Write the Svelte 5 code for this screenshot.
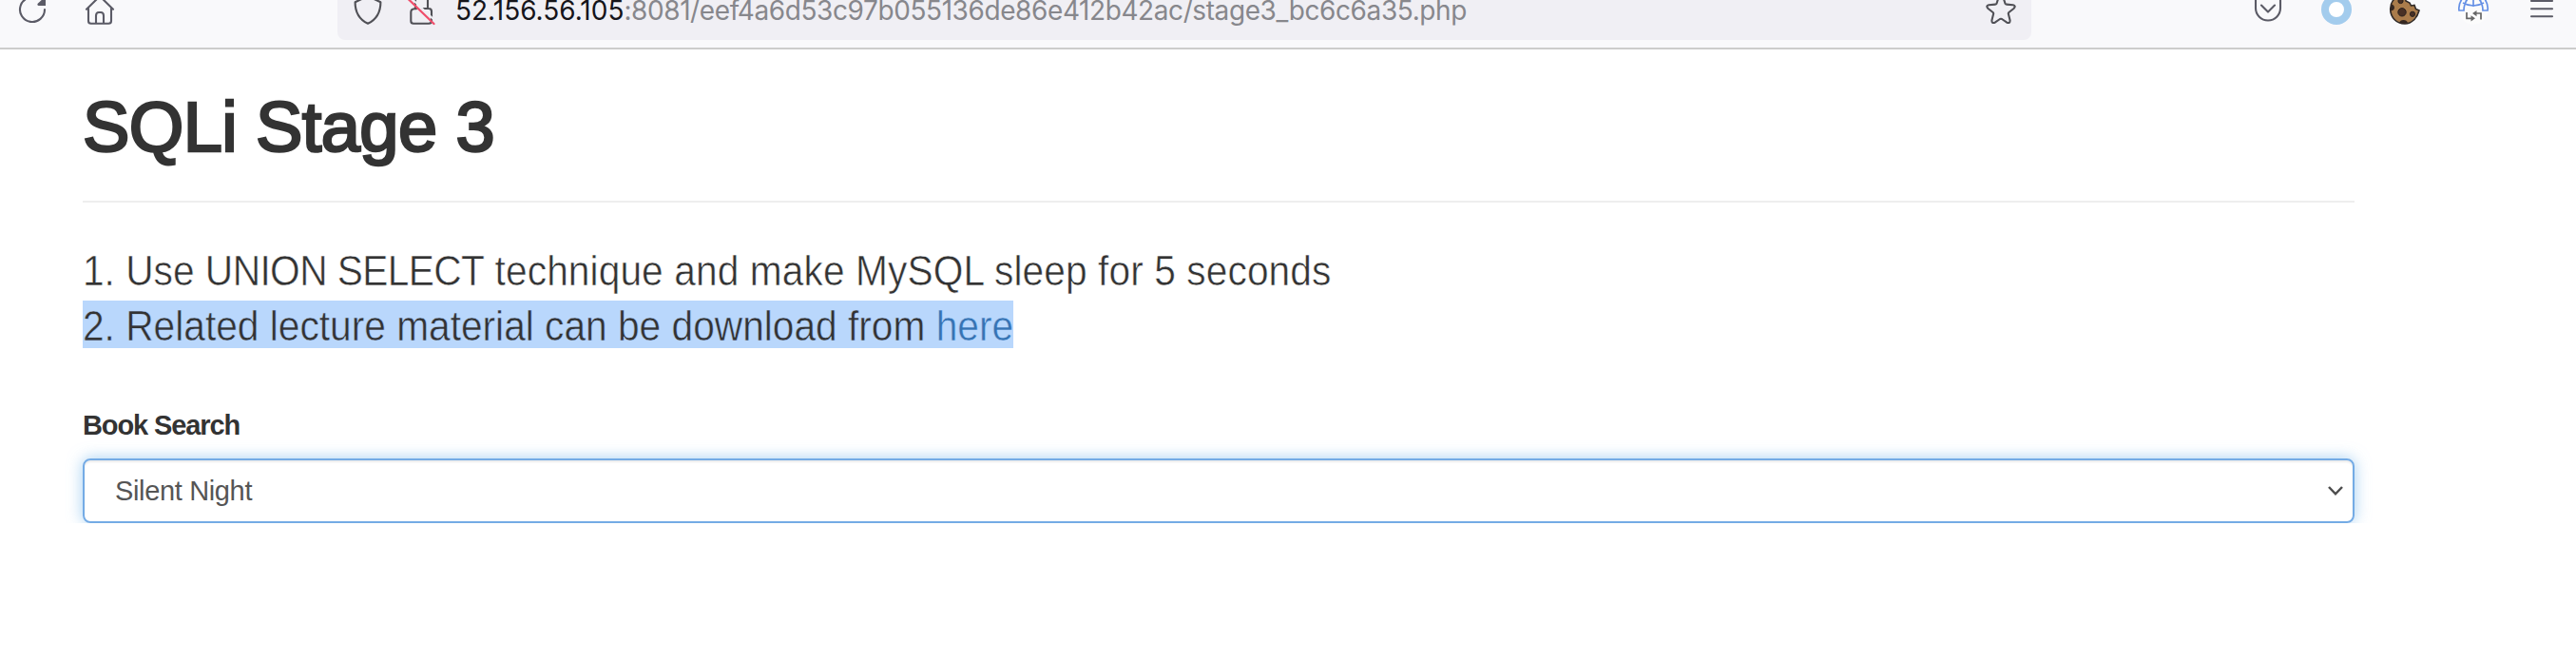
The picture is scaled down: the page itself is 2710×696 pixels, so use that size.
<script>
  const host = '52.156.56.105';
  const path = ':8081/eef4a6d53c97b055136de86e412b42ac/stage3_bc6c6a35.php';
</script>

<header class="toolbar">
  <nav class="nav">
    <svg class="icon" width="40" height="50" viewBox="14 0 40 50" aria-label="Reload">
      <path d="M47 10A13 13 0 1 1 40 -1.5" />
      <path class="solid" d="M48 -4V6H40.5Q38.5 5 40 3.5Z" />
    </svg>
    <svg class="icon" width="40" height="50" viewBox="85 0 40 50" aria-label="Home">
      <path d="M91 9.7L103.4 -2.4Q105 -4 106.6 -2.4L119 9.7M93 8.5V22Q93 24.8 95.8 24.8H114.2Q117 24.8 117 22V8.5M101 24.5V16.5Q101 13 104 13H106Q109 13 109 16.5V24.5" />
    </svg>
  </nav>

  <div class="address">
    <svg class="icon dark" width="105" height="42" viewBox="355 0 105 42" aria-hidden="true">
      <path d="M387 -4L400.4 2.2C400.4 12 397 20 387 24.8C377 20 373.6 12 373.6 2.2Z" />
      <path d="M437 9V-1M450 -1V9M444.5 9H451Q454 9 454 12V22Q454 24.8 451 24.8H435Q432.3 24.8 432.3 22V13Q432.3 9.5 436 9.3H438" />
      <path class="gap" d="M432.5 -2L458.5 22.5" />
      <path class="slash" d="M429.5 -1L456.5 25" />
    </svg>
    <div class="url"><span class="host">{host}</span><span class="path">{path}</span></div>
    <svg class="icon dark star" width="50" height="42" viewBox="2080 0 50 42" aria-label="Bookmark">
      <path d="M2103.4 -5.5Q2105 -8 2106.6 -5.5L2109.5 3.8Q2110 4.6 2111 4.6L2117.8 5.2Q2121 6 2118.8 8.7L2113.4 13Q2112.6 13.8 2112.9 14.8L2114.6 21.5Q2114.6 25 2111.3 23.7L2106 20Q2105 19.4 2104 20L2098.7 23.7Q2095.4 25 2095.4 21.5L2097.1 14.8Q2097.4 13.8 2096.6 13L2091.2 8.7Q2089 6 2092.2 5.2L2099 4.6Q2100 4.6 2100.5 3.8Z" />
    </svg>
  </div>

  <div class="extensions">
    <svg class="icon" width="40" height="50" viewBox="2366 0 40 50" aria-label="Pocket">
      <path d="M2373 -3V8.5A13 13 0 0 0 2399 8.5V-3M2379 5.5L2386 12.6L2393 5.5" />
    </svg>
    <svg width="40" height="50" viewBox="2438 0 40 50" aria-hidden="true">
      <circle cx="2458" cy="10" r="12" fill="#fff" stroke="#a3cced" stroke-width="8" />
    </svg>
    <svg width="40" height="50" viewBox="2510 0 40 50" aria-hidden="true">
      <path d="M2530 -5L2531 1L2535 3L2536.5 6L2540 5.5L2541.5 9.5L2545 11C2543 19 2537 25 2530 25C2521 25 2514.7 18 2514.7 9.5C2514.7 4 2517 0 2521 -3Z" fill="#aa7c4b" stroke="#2f2a28" stroke-width="1.6" />
      <circle cx="2527" cy="12.8" r="4.2" fill="#493125" stroke="#29211e" />
      <circle cx="2538" cy="14.8" r="2.6" fill="#493125" stroke="#29211e" />
      <circle cx="2525.5" cy="1" r="2.6" fill="#493125" stroke="#29211e" />
      <path d="M2515 4Q2519 5 2519 8T2515 11.5ZM2524 24Q2525 21 2528.5 21T2533 24Q2529 26 2524 24Z" fill="#352721" />
    </svg>
    <svg width="40" height="50" viewBox="2582 0 40 50" aria-hidden="true">
      <circle cx="2602" cy="10" r="15.5" fill="#fcfcfc" />
      <g fill="none" stroke="#6590e5" stroke-width="1.7">
        <path d="M2590 -1Q2586 5 2587 11H2592Q2592 4 2596 -1M2614 -1Q2618 5 2617 11H2612Q2612 4 2608 -1M2602 -1V7M2591 3Q2602 9 2613 3M2595 -1L2593 5M2609 -1L2611 5" />
      </g>
      <path d="M2595 13V19.3H2601M2610 20.5V14H2604" fill="none" stroke="#666" stroke-width="1.7" />
      <path d="M2599.5 16.2L2604 19.3L2599.5 22.4ZM2605.5 11L2601 14L2605.5 17.2Z" fill="#666" />
    </svg>
    <svg class="icon" width="40" height="50" viewBox="2654 0 40 50" aria-label="Menu">
      <path d="M2663 1H2685M2663 9.2H2685M2663 17.3H2685" />
    </svg>
  </div>
</header>

<main class="container">
  <h1>SQLi Stage 3</h1>
  <div class="lead">
    <p>1. Use <span class="caps">UNION SELECT</span> <span class="rest">technique and make MySQL sleep for 5 seconds</span></p>
    <p class="selected">2. Related lecture material can be download from <span class="link">here</span></p>
  </div>
  <div class="label">Book Search</div>
  <div class="select" role="combobox" aria-expanded="false" aria-controls="books" tabindex="0">
    <span id="books">Silent Night</span>
    <svg width="20" height="14" viewBox="0 0 20 14" aria-hidden="true">
      <path d="M3 3L10 10.3L17 3" />
    </svg>
  </div>
</main>

<style>
  :global(body) {
    margin: 0;
    background: #fff;
    overflow: hidden;
  }
  * {
    box-sizing: border-box;
  }
  svg {
    display: block;
    flex: none;
  }
  .toolbar {
    display: flex;
    height: 52px;
    background: #f9f9fb;
    border-bottom: 2px solid #ccc;
  }
  .nav {
    display: flex;
    gap: 31px;
    width: 355px;
    padding-left: 14px;
  }
  .icon {
    fill: none;
    stroke: #5b5b66;
    stroke-width: 2.1;
    stroke-linecap: round;
    stroke-linejoin: round;
  }
  .dark {
    stroke: #505056;
  }
  .solid {
    fill: #5b5b66;
    stroke: none;
  }
  .gap {
    stroke: #f0eff4;
    stroke-width: 2;
  }
  .slash {
    stroke: #ef4e6b;
    stroke-width: 2.2;
  }
  .address {
    display: flex;
    width: 1782px;
    height: 42px;
    background: #f0eff4;
    border-radius: 0 0 8px 8px;
  }
  .url {
    flex: 1;
    padding-left: 19px;
    font: 28px/22px Inter, sans-serif;
    white-space: nowrap;
    color: #87878c;
  }
  .host {
    color: #15141a;
    letter-spacing: 0;
  }
  .path {
    letter-spacing: -0.41px;
  }
  .star {
    margin-right: 7px;
  }
  .extensions {
    display: flex;
    gap: 32px;
    margin-left: 229px;
  }
  .container {
    width: 2390px;
    margin-left: 87px;
    font-family: 'Liberation Sans', Arial, sans-serif;
    color: #333;
  }
  h1 {
    height: 161px;
    margin: 0;
    padding-top: 42px;
    border-bottom: 2px solid #eee;
    font-size: 74px;
    font-weight: 400;
    line-height: 80px;
    letter-spacing: -0.6px;
    -webkit-text-stroke: 2.6px #333;
  }
  .lead {
    padding-top: 45px;
    height: 207px;
  }
  p {
    width: max-content;
    height: 50px;
    margin: 0 0 8px;
    font-size: 44px;
    line-height: 53px;
    white-space: nowrap;
    transform: scaleX(0.9245);
    transform-origin: left;
    -webkit-text-stroke: 0.55px #fff;
  }
  .caps {
    letter-spacing: -0.65px;
  }
  .rest {
    letter-spacing: 0.1px;
  }
  .selected {
    background: #b9d7fc;
    -webkit-text-stroke-color: #b9d7fc;
  }
  .link {
    color: #3673b3;
  }
  .label {
    height: 62px;
    padding-top: 10px;
    font-size: 29px;
    font-weight: 700;
    line-height: 34px;
    letter-spacing: -1.1px;
  }
  .select {
    display: flex;
    align-items: center;
    justify-content: space-between;
    height: 68px;
    padding: 0 8px 0 32px;
    border: 2px solid #74abe5;
    border-radius: 8px;
    outline: none;
    box-shadow: inset 0 2px 2px rgba(0, 0, 0, 0.075), 0 0 16px rgba(102, 175, 233, 0.6);
    font-size: 29px;
    letter-spacing: -0.35px;
    color: #555;
  }
  .select svg {
    fill: none;
    stroke: #4d4d4d;
    stroke-width: 2.5;
  }
</style>
